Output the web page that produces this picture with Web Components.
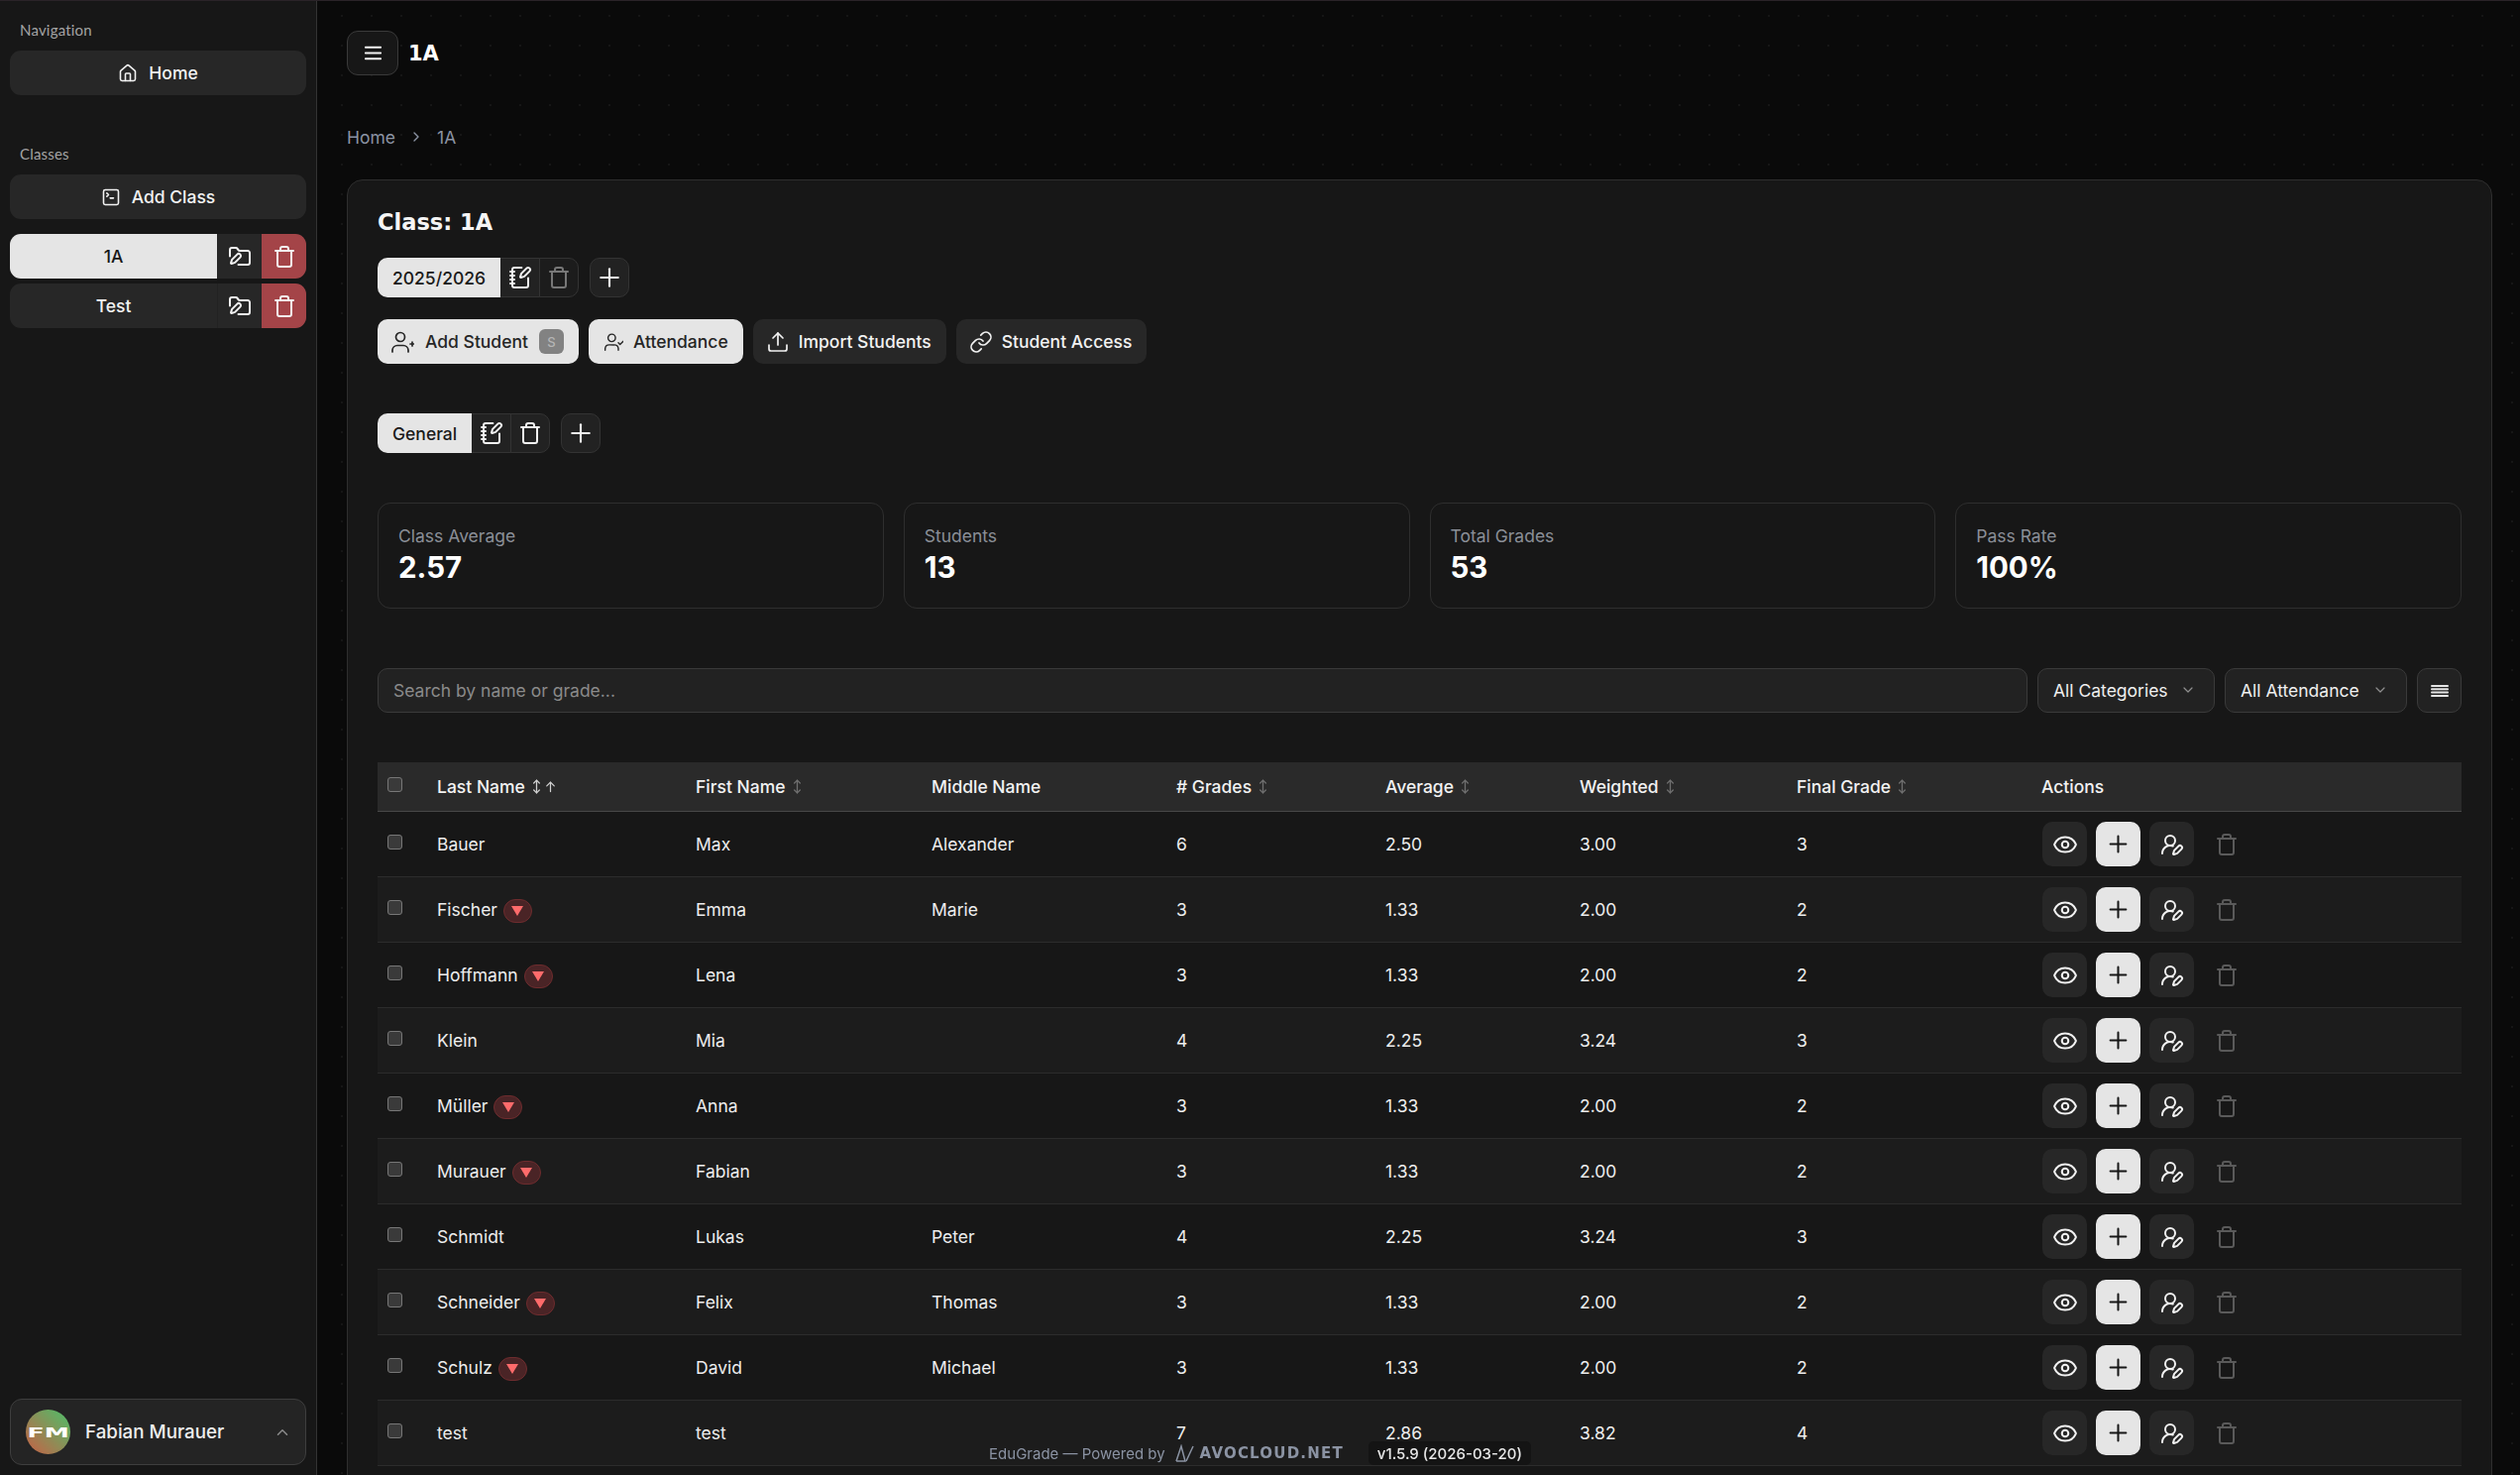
<!DOCTYPE html>
<html lang="en">
<head>
<meta charset="utf-8">
<title>EduGrade</title>
<style>
    html, body { margin: 0; height: 100%; background: #0a0a0a; overflow: hidden; }
    body { font-family: Inter, "Liberation Sans", sans-serif; color: #f2f2f2; font-size: 17.5px; }
</style>
</head>
<body>
<edu-app>
    <edu-sidebar slot="sidebar">
        <section-label>Navigation</section-label>
        <side-button icon="house">Home</side-button>
        <section-label class="classes">Classes</section-label>
        <side-button icon="terminal">Add Class</side-button>
        <class-row active>1A</class-row>
        <class-row>Test</class-row>
        <user-menu slot="bottom" name="Fabian Murauer"></user-menu>
    </edu-sidebar>
    <page-header title="1A"></page-header>
    <bread-crumbs></bread-crumbs>
    <class-card title="Class: 1A">
        <tab-group label="2025/2026" dim class="year"></tab-group>
        <action-bar>
            <action-btn icon="user-plus" light badge="S">Add Student</action-btn>
            <action-btn icon="user-check" light>Attendance</action-btn>
            <action-btn icon="upload">Import Students</action-btn>
            <action-btn icon="link">Student Access</action-btn>
        </action-bar>
        <tab-group label="General" class="group"></tab-group>
        <stat-grid>
            <stat-card label="Class Average" value="2.57"></stat-card>
            <stat-card label="Students" value="13"></stat-card>
            <stat-card label="Total Grades" value="53"></stat-card>
            <stat-card label="Pass Rate" value="100%"></stat-card>
        </stat-grid>
        <filter-bar></filter-bar>
        <student-table>
            <student-row last="Bauer" first="Max" middle="Alexander" grades="6" avg="2.50" weighted="3.00" final="3"></student-row>
            <student-row warn last="Fischer" first="Emma" middle="Marie" grades="3" avg="1.33" weighted="2.00" final="2"></student-row>
            <student-row warn last="Hoffmann" first="Lena" middle="" grades="3" avg="1.33" weighted="2.00" final="2"></student-row>
            <student-row last="Klein" first="Mia" middle="" grades="4" avg="2.25" weighted="3.24" final="3"></student-row>
            <student-row warn last="Müller" first="Anna" middle="" grades="3" avg="1.33" weighted="2.00" final="2"></student-row>
            <student-row warn last="Murauer" first="Fabian" middle="" grades="3" avg="1.33" weighted="2.00" final="2"></student-row>
            <student-row last="Schmidt" first="Lukas" middle="Peter" grades="4" avg="2.25" weighted="3.24" final="3"></student-row>
            <student-row warn last="Schneider" first="Felix" middle="Thomas" grades="3" avg="1.33" weighted="2.00" final="2"></student-row>
            <student-row warn last="Schulz" first="David" middle="Michael" grades="3" avg="1.33" weighted="2.00" final="2"></student-row>
            <student-row last="test" first="test" middle="" grades="7" avg="2.86" weighted="3.82" final="4"></student-row>
        </student-table>
    </class-card>
    <app-footer slot="footer"></app-footer>
</edu-app>

<script>
const ICONS = {
    'house': '<path d="M15 21v-8a1 1 0 0 0-1-1h-4a1 1 0 0 0-1 1v8"/><path d="M3 10a2 2 0 0 1 .709-1.528l7-5.999a2 2 0 0 1 2.582 0l7 5.999A2 2 0 0 1 21 10v9a2 2 0 0 1-2 2H5a2 2 0 0 1-2-2z"/>',
    'terminal': '<path d="m7 11 2-2-2-2"/><path d="M11 13h4"/><rect x="3" y="3" width="18" height="18" rx="2"/>',
    'folder-pen': '<path d="M2 11.5V5a2 2 0 0 1 2-2h3.9c.7 0 1.3.3 1.7.9l.8 1.2c.4.6 1 .9 1.7.9H20a2 2 0 0 1 2 2v10a2 2 0 0 1-2 2h-9.5"/><path d="M12.378 12.626a1 1 0 0 0-3.004-3.004l-5.01 5.012a2 2 0 0 0-.506.854l-.837 2.87a.5.5 0 0 0 .62.62l2.87-.837a2 2 0 0 0 .854-.506z"/>',
    'trash': '<path d="M3 6h18"/><path d="M19 6v14c0 1-1 2-2 2H7c-1 0-2-1-2-2V6"/><path d="M8 6V4c0-1 1-2 2-2h4c1 0 2 1 2 2v2"/>',
    'notebook-pen': '<path d="M13.4 2H6a2 2 0 0 0-2 2v16a2 2 0 0 0 2 2h12a2 2 0 0 0 2-2v-7.4"/><path d="M2 6h4"/><path d="M2 10h4"/><path d="M2 14h4"/><path d="M2 18h4"/><path d="M21.378 5.626a1 1 0 1 0-3.004-3.004l-5.01 5.012a2 2 0 0 0-.506.854l-.837 2.87a.5.5 0 0 0 .62.62l2.87-.837a2 2 0 0 0 .854-.506z"/>',
    'plus': '<path d="M5 12h14"/><path d="M12 5v14"/>',
    'menu': '<path d="M4 6h16"/><path d="M4 12h16"/><path d="M4 18h16"/>',
    'chevron-right': '<path d="m9 18 6-6-6-6"/>',
    'chevron-down': '<path d="m6 9 6 6 6-6"/>',
    'chevron-up': '<path d="m18 15-6-6-6 6"/>',
    'user-plus': '<circle cx="10" cy="7" r="4.5"/><path d="M2 22v-2a5 5 0 0 1 5-4.5h6a5 5 0 0 1 5 4.5v2"/><path d="M22 12v4"/><path d="M20 14h4"/>',
    'user-check': '<circle cx="10" cy="7" r="4.5"/><path d="M2 22v-2a5 5 0 0 1 5-4.5h6a5 5 0 0 1 5 4.5v2"/><path d="m18 13 2 2 4-4"/>',
    'user-pen': '<path d="M2 21a8 8 0 0 1 10.821-7.487"/><path d="M21.378 16.626a1 1 0 0 0-3.004-3.004l-4.01 4.012a2 2 0 0 0-.506.854l-.837 2.87a.5.5 0 0 0 .62.62l2.87-.837a2 2 0 0 0 .854-.506z"/><circle cx="10" cy="8" r="5"/>',
    'upload': '<path d="M12 3v12"/><path d="m17 8-5-5-5 5"/><path d="M21 15v4a2 2 0 0 1-2 2H5a2 2 0 0 1-2-2v-4"/>',
    'link': '<path d="M10 13a5 5 0 0 0 7.54.54l3-3a5 5 0 0 0-7.07-7.07l-1.72 1.71"/><path d="M14 11a5 5 0 0 0-7.54-.54l-3 3a5 5 0 0 0 7.07 7.07l1.71-1.71"/>',
    'eye': '<path d="M2.062 12.348a1 1 0 0 1 0-.696 10.75 10.75 0 0 1 19.876 0 1 1 0 0 1 0 .696 10.75 10.75 0 0 1-19.876 0"/><circle cx="12" cy="12" r="3"/>',
    'rows': '<path d="M4 7h16"/><path d="M4 10.3h16"/><path d="M4 13.6h16"/><path d="M4 16.9h16"/>',
    'sort': '<path d="M12 3v18"/><path d="m8 7 4-4 4 4"/><path d="m8 17 4 4 4-4"/>',
    'arrow-up': '<path d="M12 20V5"/><path d="m6 11 6-6 6 6"/>'
};

function icon(name, size, stroke) {
    return `<svg xmlns="http://www.w3.org/2000/svg" width="${size}" height="${size}" viewBox="0 0 24 24" fill="none" stroke="currentColor" stroke-width="${stroke || 2}" stroke-linecap="round" stroke-linejoin="round" style="display:block;flex:none">${ICONS[name]}</svg>`;
}

class Base extends HTMLElement {
    constructor() {
        super();
        this.attachShadow({ mode: 'open' });
    }
    attr(name) {
        return this.getAttribute(name) || '';
    }
}

class EduApp extends Base {
    connectedCallback() {
        this.shadowRoot.innerHTML = `
            <style>
                :host {
                    display: grid;
                    grid-template-columns: 320px 1fr;
                    height: 100vh;
                    box-sizing: border-box;
                    overflow: hidden;
                    border-top: 1px solid #2a2328;
                    background-color: #0a0a0a;
                    background-image: radial-gradient(circle at center, #161616 1px, transparent 1.4px);
                    background-size: 30px 30px;
                }
                main {
                    min-width: 0;
                    height: calc(100vh - 1px);
                    overflow: hidden;
                    padding: 30px 28px 0 30px;
                    box-sizing: border-box;
                }
            </style>
            <slot name="sidebar"></slot>
            <main><slot></slot></main>
            <slot name="footer"></slot>
        `;
    }
}

class EduSidebar extends Base {
    connectedCallback() {
        this.shadowRoot.innerHTML = `
            <style>
                :host {
                    display: flex;
                    flex-direction: column;
                    gap: 5px;
                    box-sizing: border-box;
                    height: calc(100vh - 1px);
                    padding: 19px 10px 10px;
                    background: #171717;
                    border-right: 1px solid #333;
                }
                .bottom { margin-top: auto; }
                ::slotted(side-button) { margin-bottom: 10px; }
                ::slotted(.classes) { margin-top: 34px; }
            </style>
            <slot></slot>
            <div class="bottom"><slot name="bottom"></slot></div>
        `;
    }
}

class SectionLabel extends Base {
    connectedCallback() {
        this.shadowRoot.innerHTML = `
            <style>
                :host {
                    display: block;
                    padding: 0 10px;
                    height: 21px;
                    line-height: 21px;
                    font-family: Lato, sans-serif;
                    font-size: 15px;
                    letter-spacing: .2px;
                    color: #a3a3a3;
                    margin-bottom: 5px;
                }
            </style>
            <slot></slot>
        `;
    }
}

class SideButton extends Base {
    connectedCallback() {
        this.shadowRoot.innerHTML = `
            <style>
                :host {
                    display: flex;
                    align-items: center;
                    justify-content: center;
                    gap: 11px;
                    height: 45px;
                    border-radius: 11px;
                    background: #272727;
                    color: #f2f2f2;
                    font-weight: 500;
                    font-size: 17.5px;
                }
            </style>
            ${icon(this.attr('icon'), 20, 1.9)}
            <span><slot></slot></span>
        `;
    }
}

class ClassRow extends Base {
    connectedCallback() {
        this.shadowRoot.innerHTML = `
            <style>
                :host {
                    display: grid;
                    grid-template-columns: 209px 45px 45px;
                    height: 45px;
                    border-radius: 11px;
                    overflow: hidden;
                    background: #272727;
                    font-weight: 500;
                    font-size: 17.5px;
                }
                :host([active]) .name { background: #e5e5e5; color: #171717; }
                .name, .cell { display: flex; align-items: center; justify-content: center; }
                .cell { border-left: 1px solid #222; }
                .del { background: #a44448; border: none; }
            </style>
            <div class="name"><slot></slot></div>
            <div class="cell">${icon('folder-pen', 24, 2)}</div>
            <div class="cell del">${icon('trash', 24, 2)}</div>
        `;
    }
}

class UserMenu extends Base {
    connectedCallback() {
        this.shadowRoot.innerHTML = `
            <style>
                :host {
                    display: flex;
                    align-items: center;
                    gap: 15px;
                    height: 67px;
                    box-sizing: border-box;
                    padding: 0 14px 0 15px;
                    border: 1px solid #3e3e3e;
                    border-radius: 12px;
                    background: #242424;
                    font-weight: 500;
                    font-size: 18.75px;
                }
                .avatar {
                    width: 45px;
                    height: 45px;
                    border-radius: 50%;
                    flex: none;
                    display: flex;
                    align-items: center;
                    justify-content: center;
                    background: linear-gradient(to top right, #c95f45, #4cc06a);
                    color: #fff;
                    font-family: "DejaVu Sans", sans-serif;
                    font-weight: 700;
                    font-size: 14px;
                }
                .avatar span { display: block; transform: scaleX(1.8); }
                .name { flex: 1; color: #eee; }
                .chev { color: #8a8a8a; }
            </style>
            <div class="avatar"><span>FM</span></div>
            <div class="name">${this.attr('name')}</div>
            <div class="chev">${icon('chevron-up', 18, 2)}</div>
        `;
    }
}

class PageHeader extends Base {
    connectedCallback() {
        this.shadowRoot.innerHTML = `
            <style>
                :host {
                    display: flex;
                    align-items: center;
                    gap: 10px;
                    height: 45px;
                }
                .menu {
                    width: 52px;
                    height: 45px;
                    box-sizing: border-box;
                    display: flex;
                    align-items: center;
                    justify-content: center;
                    border: 1px solid #3a3a3a;
                    border-radius: 11px;
                    background: #171717;
                }
                h1 {
                    margin: 0;
                    font-family: "DejaVu Sans", sans-serif;
                    font-weight: 700;
                    font-size: 21px;
                    color: #fff;
                }
            </style>
            <div class="menu">${icon('menu', 23, 1.9)}</div>
            <h1>${this.attr('title')}</h1>
        `;
    }
}

class BreadCrumbs extends Base {
    connectedCallback() {
        this.shadowRoot.innerHTML = `
            <style>
                :host {
                    display: flex;
                    align-items: center;
                    gap: 13px;
                    height: 24px;
                    margin: 50px 0 31px;
                    color: #8b93a3;
                    font-size: 17.5px;
                }
            </style>
            <span>Home</span>
            ${icon('chevron-right', 16, 2)}
            <span>1A</span>
        `;
    }
}

class ClassCard extends Base {
    connectedCallback() {
        this.shadowRoot.innerHTML = `
            <style>
                :host {
                    display: block;
                    box-sizing: border-box;
                    padding: 24px 30px 0;
                    min-height: 1400px;
                    background: #171717;
                    border: 1px solid #2e2e2e;
                    border-radius: 16px;
                }
                h2 {
                    margin: 0 0 18px;
                    height: 36px;
                    line-height: 36px;
                    font-family: "DejaVu Sans", sans-serif;
                    font-weight: 700;
                    font-size: 22.5px;
                    color: #f5f5f5;
                }
            </style>
            <h2>${this.attr('title')}</h2>
            <slot></slot>
        `;
    }
}

class TabGroup extends Base {
    connectedCallback() {
        const dim = this.hasAttribute('dim');
        this.shadowRoot.innerHTML = `
            <style>
                :host {
                    display: flex;
                    gap: 11px;
                    height: 40px;
                    font-weight: 500;
                    font-size: 17.5px;
                }
                .group { display: flex; height: 40px; }
                .label {
                    display: flex;
                    align-items: center;
                    padding: 0 15px;
                    background: #e5e5e5;
                    color: #1a1a1a;
                    border-radius: 10px 0 0 10px;
                }
                .cell, .plus {
                    display: flex;
                    align-items: center;
                    justify-content: center;
                    width: 40px;
                    box-sizing: border-box;
                    border: 1px solid #333;
                    background: #222;
                    color: #f2f2f2;
                }
                .cell.edit { border-left: none; }
                .cell.del { margin-left: -1px; border-radius: 0 10px 10px 0; }
                .cell.del.dim { color: #777; background: #1c1c1c; }
                .plus { border-radius: 10px; }
            </style>
            <div class="group">
                <div class="label">${this.attr('label')}</div>
                <div class="cell edit">${icon('notebook-pen', 24, 2)}</div>
                <div class="cell del ${dim ? 'dim' : ''}">${icon('trash', 24, 2)}</div>
            </div>
            <div class="plus">${icon('plus', 30, 1.7)}</div>
        `;
        this.style.marginBottom = dim ? '22px' : '50px';
    }
}

class ActionBar extends Base {
    connectedCallback() {
        this.shadowRoot.innerHTML = `
            <style>
                :host {
                    display: flex;
                    gap: 10px;
                    margin-bottom: 50px;
                }
            </style>
            <slot></slot>
        `;
    }
}

class ActionBtn extends Base {
    connectedCallback() {
        const badge = this.attr('badge');
        const size = this.attr('icon') === 'user-check' ? 20 : 24;
        this.shadowRoot.innerHTML = `
            <style>
                :host {
                    display: flex;
                    align-items: center;
                    gap: 9px;
                    height: 45px;
                    padding: 0 15px 0 13px;
                    border-radius: 10px;
                    background: #272727;
                    color: #f2f2f2;
                    font-weight: 500;
                    font-size: 17.5px;
                }
                :host([light]) { background: #e5e5e5; color: #262626; }
                :host([icon="user-check"]) { padding-left: 15px; gap: 10px; }
                :host([badge]) { gap: 11px; padding-right: 15px; }
                .badge {
                    width: 25px;
                    height: 25px;
                    border-radius: 6px;
                    background: #828282;
                    color: #b5b5b5;
                    font-size: 13px;
                    display: flex;
                    align-items: center;
                    justify-content: center;
                }
            </style>
            ${icon(this.attr('icon'), size, 1.7)}
            <span><slot></slot></span>
            ${badge ? `<span class="badge">${badge}</span>` : ''}
        `;
    }
}

class StatGrid extends Base {
    connectedCallback() {
        this.shadowRoot.innerHTML = `
            <style>
                :host {
                    display: grid;
                    grid-template-columns: repeat(4, 1fr);
                    gap: 20px;
                    margin-bottom: 60px;
                }
            </style>
            <slot></slot>
        `;
    }
}

class StatCard extends Base {
    connectedCallback() {
        this.shadowRoot.innerHTML = `
            <style>
                :host {
                    display: block;
                    box-sizing: border-box;
                    height: 107px;
                    padding: 21px 20px 0;
                    border: 1px solid #2e2e2e;
                    border-radius: 13px;
                }
                .label { color: #8b8f97; font-size: 17.5px; line-height: 24px; }
                .value { color: #fff; font-size: 29.5px; font-weight: 700; line-height: 36px; margin-top: 1px; }
            </style>
            <div class="label">${this.attr('label')}</div>
            <div class="value">${this.attr('value')}</div>
        `;
    }
}

class FilterBar extends Base {
    connectedCallback() {
        this.shadowRoot.innerHTML = `
            <style>
                :host {
                    display: grid;
                    grid-template-columns: 1fr 179px 184px 45px;
                    gap: 10px;
                    height: 45px;
                    margin-bottom: 50px;
                    font-size: 17.5px;
                }
                .box {
                    display: flex;
                    align-items: center;
                    box-sizing: border-box;
                    border: 1px solid #3a3a3a;
                    border-radius: 10px;
                    background: #222;
                }
                .search { padding: 0 15px; color: #8a8a8a; }
                .select { justify-content: space-between; padding: 0 18px 0 15px; font-weight: 400; color: #eee; }
                .select svg { color: #8f8f8f; margin-bottom: 2px; }
                .rows { justify-content: center; color: #e5e5e5; }
            </style>
            <div class="box search">Search by name or grade...</div>
            <div class="box select">All Categories ${icon('chevron-down', 16, 1.8)}</div>
            <div class="box select">All Attendance ${icon('chevron-down', 16, 1.8)}</div>
            <div class="box rows">${icon('rows', 24, 2)}</div>
        `;
    }
}

class StudentTable extends Base {
    connectedCallback() {
        const sorts = { 'Last Name': 'both', 'First Name': 'sort', '# Grades': 'sort', 'Average': 'sort', 'Weighted': 'sort', 'Final Grade': 'sort' };
        const heads = ['Last Name', 'First Name', 'Middle Name', '# Grades', 'Average', 'Weighted', 'Final Grade', 'Actions'];
        this.shadowRoot.innerHTML = `
            <style>
                :host {
                    display: block;
                    --cols: 50px 261px 238px 247px 211px 196px 219px 247px 1fr;
                }
                .head {
                    display: grid;
                    grid-template-columns: var(--cols);
                    align-items: center;
                    height: 50px;
                    box-sizing: border-box;
                    background: #2a2a2a;
                    border-bottom: 1px solid #484848;
                    font-weight: 500;
                    font-size: 17.5px;
                }
                .th { display: flex; align-items: center; gap: 3px; padding-left: 10px; color: #f2f2f2; }
                .s { color: #707070; }
                .s.on { color: #d0d0d0; }
                .cb {
                    width: 15px;
                    height: 15px;
                    margin: 0 0 5px 10px;
                    box-sizing: border-box;
                    border: 1px solid #777;
                    border-radius: 3px;
                    background: #3a3a3a;
                }
            </style>
            <div class="head">
                <div class="cb"></div>
                ${heads.map((h) => {
                    let marks = '';
                    if (sorts[h] === 'sort') marks = `<span class="s">${icon('sort', 17, 1.8)}</span>`;
                    if (sorts[h] === 'both') marks = `<span class="s on">${icon('sort', 17, 1.8)}</span><span class="s on" style="margin-left:-5px">${icon('arrow-up', 15, 2)}</span>`;
                    return `<div class="th">${h}${marks}</div>`;
                }).join('')}
            </div>
            <slot></slot>
        `;
    }
}

class StudentRow extends Base {
    connectedCallback() {
        const a = (n) => this.attr(n);
        this.shadowRoot.innerHTML = `
            <style>
                :host {
                    display: grid;
                    grid-template-columns: var(--cols);
                    align-items: center;
                    height: 66px;
                    box-sizing: border-box;
                    border-bottom: 1px solid #2c2c2c;
                    font-size: 17.5px;
                    color: #ededed;
                }
                :host(:nth-of-type(even)) { background: #1c1c1c; }
                .td { padding-left: 10px; display: flex; align-items: center; gap: 6px; }
                .cb {
                    width: 15px;
                    height: 15px;
                    margin: 0 0 5px 10px;
                    box-sizing: border-box;
                    border: 1px solid #777;
                    border-radius: 3px;
                    background: #3a3a3a;
                }
                .warn {
                    width: 29px;
                    height: 24px;
                    box-sizing: border-box;
                    margin-top: 2px;
                    display: flex;
                    align-items: center;
                    justify-content: center;
                    background: #4a2426;
                    border: 1px solid #6e2c2e;
                    border-radius: 12px;
                }
                .tri {
                    width: 0;
                    height: 0;
                    border-left: 6px solid transparent;
                    border-right: 6px solid transparent;
                    border-top: 10px solid #ff6b6b;
                }
                .actions { gap: 9px; padding-left: 11px; }
                .btn {
                    width: 45px;
                    height: 45px;
                    display: flex;
                    align-items: center;
                    justify-content: center;
                    border-radius: 10px;
                    background: #272727;
                    color: #f2f2f2;
                }
                .btn.light { background: #e5e5e5; color: #171717; }
                .btn.ghost { background: none; color: #5a5a5a; margin-left: 1px; }
            </style>
            <div class="cb"></div>
            <div class="td">${a('last')}${this.hasAttribute('warn') ? '<span class="warn"><span class="tri"></span></span>' : ''}</div>
            <div class="td">${a('first')}</div>
            <div class="td">${a('middle')}</div>
            <div class="td">${a('grades')}</div>
            <div class="td">${a('avg')}</div>
            <div class="td">${a('weighted')}</div>
            <div class="td">${a('final')}</div>
            <div class="td actions">
                <div class="btn">${icon('eye', 26, 1.9)}</div>
                <div class="btn light">${icon('plus', 27, 1.8)}</div>
                <div class="btn">${icon('user-pen', 24, 2)}</div>
                <div class="btn ghost">${icon('trash', 24, 2)}</div>
            </div>
        `;
    }
}

class AppFooter extends Base {
    connectedCallback() {
        this.shadowRoot.innerHTML = `
            <style>
                :host {
                    position: fixed;
                    left: 0;
                    right: 0;
                    bottom: 10px;
                    display: flex;
                    align-items: center;
                    justify-content: center;
                    height: 24px;
                    font-size: 15px;
                    color: #8b93a3;
                }
                .logo { margin: 0 6px 0 10px; }
                .brand { font-family: "DejaVu Sans", sans-serif; font-weight: 700; font-size: 15px; letter-spacing: 1.2px; }
                .ver {
                    margin-left: 25px;
                    height: 24px;
                    padding: 0 9px;
                    display: flex;
                    align-items: center;
                    border-radius: 5px;
                    background: #141414;
                    color: #e8e8e8;
                    font-weight: 500;
                }
            </style>
            <span>EduGrade — Powered by</span>
            <svg class="logo" width="19" height="18" viewBox="0 0 19 18" fill="none" stroke="currentColor" stroke-width="1.5"><path d="M1 17h9L6 2 1 17"/><path d="M11 17 18 2"/></svg>
            <span class="brand">AVOCLOUD.NET</span>
            <span class="ver">v1.5.9 (2026-03-20)</span>
        `;
    }
}

customElements.define('edu-app', EduApp);
customElements.define('edu-sidebar', EduSidebar);
customElements.define('section-label', SectionLabel);
customElements.define('side-button', SideButton);
customElements.define('class-row', ClassRow);
customElements.define('user-menu', UserMenu);
customElements.define('page-header', PageHeader);
customElements.define('bread-crumbs', BreadCrumbs);
customElements.define('class-card', ClassCard);
customElements.define('tab-group', TabGroup);
customElements.define('action-bar', ActionBar);
customElements.define('action-btn', ActionBtn);
customElements.define('stat-grid', StatGrid);
customElements.define('stat-card', StatCard);
customElements.define('filter-bar', FilterBar);
customElements.define('student-table', StudentTable);
customElements.define('student-row', StudentRow);
customElements.define('app-footer', AppFooter);
</script>
</body>
</html>
